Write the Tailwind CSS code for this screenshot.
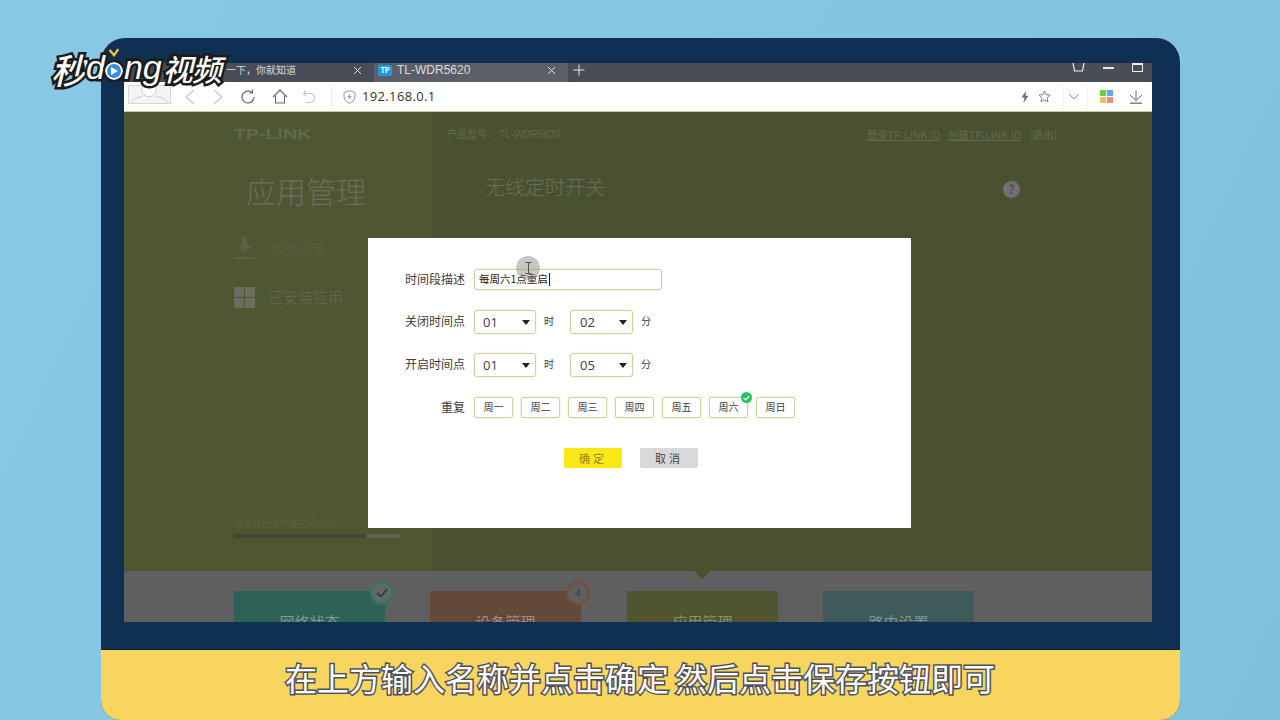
<!DOCTYPE html>
<html lang="zh">
<head>
<meta charset="utf-8">
<script src="https://cdn.jsdelivr.net/npm/@tailwindcss/browser@4"></script>
</head>
<body class="m-0 overflow-hidden">
<div class="relative w-[1280px] h-[720px] overflow-hidden pt-[38px] pl-[101px] bg-[linear-gradient(115deg,#88c8e7_0%,#85c5e4_60%,#7fc0de_100%)] font-['Noto_Sans_CJK_SC','Noto_Sans',sans-serif]">

  <div class="w-[1079px] h-[682px] flex flex-col rounded-t-[24px] rounded-b-[20px] overflow-hidden bg-[#0f3050]">
    <div class="pt-[25px] pl-[23px] pr-[28px] pb-[27px]">
      <div class="h-[559px] flex flex-col overflow-hidden">

        <!-- tab bar -->
        <div class="h-[19px] shrink-0 flex items-center bg-[#484d57] text-[10px] text-[#d8dadd] leading-none">
          <div class="w-[250px] h-full flex items-center justify-between pl-[102px] pr-[12px] pb-[5px]">
            <span class="whitespace-nowrap">一下，你就知道</span>
            <svg class="w-[9px] h-[9px]" viewBox="0 0 9 9" fill="none" stroke="#d8dadd" stroke-width="1"><path d="M1 1l7 7M8 1l-7 7"/></svg>
          </div>
          <div class="w-[194px] h-full flex items-center justify-between pl-[4px] pr-[12px] pb-[5px] bg-[#5b6068]">
            <div class="flex items-center gap-[5px]">
              <span class="w-[14px] h-[11px] rounded-[2px] bg-[#1e9be8] text-white text-[7px] font-bold flex items-center justify-center">TP</span>
              <span class="whitespace-nowrap font-['Liberation_Sans'] text-[12px]">TL-WDR5620</span>
            </div>
            <svg class="w-[9px] h-[9px]" viewBox="0 0 9 9" fill="none" stroke="#e2e4e6" stroke-width="1"><path d="M1 1l7 7M8 1l-7 7"/></svg>
          </div>
          <svg class="ml-[5px] mb-[5px] w-[12px] h-[12px]" viewBox="0 0 12 12" fill="none" stroke="#e8e8e8" stroke-width="1"><path d="M6 0.5v11M0.5 6h11"/></svg>
          <div class="ml-auto h-full flex items-start gap-[18px] pr-[9px]">
            <svg class="w-[13px] h-[10px]" viewBox="0 0 13 10" fill="none" stroke="#eee" stroke-width="1.2"><path d="M1 0l1.500 8h8L12 0"/></svg>
            <div class="w-[11px] h-[1.5px] mt-[4px] bg-[#e8e8e8]"></div>
            <div class="w-[11px] h-[9px] border border-[#eee] border-t-2"></div>
          </div>
        </div>

        <!-- address bar -->
        <div class="h-[30px] shrink-0 flex items-center bg-white border-b border-[#c7c9a8] pl-[4px] pr-[9px] text-[#8a8a8a]">
          <div class="w-[43px] h-[19px] -mt-[5px] bg-[#f4f4f4] border border-[#d5d5d5] overflow-hidden">
            <svg viewBox="0 0 43 19" class="w-full h-full" fill="none" stroke="#c9c9c9"><path d="M2 19c1-6 8-6 12-8M41 19c-1-6-8-6-12-8"/><circle cx="21" cy="4" r="8" fill="#fff"/></svg>
          </div>
          <svg class="ml-[13px] w-[12px] h-[16px]" viewBox="0 0 12 16" fill="none" stroke="#c4c4c4" stroke-width="1.1"><path d="M10 1L2 8l8 7"/></svg>
          <svg class="ml-[16px] w-[12px] h-[16px]" viewBox="0 0 12 16" fill="none" stroke="#c4c4c4" stroke-width="1.1"><path d="M2 1l8 7-8 7"/></svg>
          <svg class="ml-[16px] w-[16px] h-[16px]" viewBox="0 0 16 16" fill="none" stroke="#666" stroke-width="1.2"><path d="M14 8a6 6 0 1 1-2-4.5"/><path d="M12.5 0.5v3.5H9"/></svg>
          <svg class="ml-[16px] w-[16px] h-[15px]" viewBox="0 0 16 15" fill="none" stroke="#666" stroke-width="1.1"><path d="M1 8l7-7 7 7"/><path d="M3.5 6.5V14h9V6.5"/></svg>
          <svg class="ml-[14px] w-[14px] h-[14px]" viewBox="0 0 14 14" fill="none" stroke="#c4c4c4" stroke-width="1.1"><path d="M4 1L1.5 3.5 4 6"/><path d="M2 3.5h6a4.5 4.5 0 0 1 0 9H4"/></svg>
          <div class="ml-[15px] w-px h-[20px] bg-[#ececec]"></div>
          <svg class="ml-[11px] w-[13px] h-[14px]" viewBox="0 0 13 14" fill="none" stroke="#8c8c8c" stroke-width="0.9"><path d="M6.5 0.7L12 2.5v4c0 3.5-2.5 5.7-5.500 6.800C3.500 12.200 1 10 1 6.500v-4z"/><path d="M6.500 4.500v4.500M4.200 6.800h4.600"/></svg>
          <span class="ml-[6px] text-[13px] tracking-[0.35px] text-[#333] font-['Open_Sans'] leading-none whitespace-nowrap">192.168.0.1</span>
          <div class="ml-auto flex items-center h-full">
            <svg class="w-[8px] h-[12px]" viewBox="0 0 8 12" fill="#6d6d6d"><path d="M5 0L0.500 6.500H3.500L2.500 12 7.500 4.800H4.500z"/></svg>
            <svg class="ml-[9px] w-[13px] h-[13px]" viewBox="0 0 13 13" fill="none" stroke="#808080" stroke-width="1"><path d="M6.500 1l1.700 3.600 3.800 0.500-2.800 2.700 0.700 3.900-3.400-1.900-3.400 1.900 0.700-3.900L1 5.100l3.800-0.500z"/></svg>
            <div class="ml-[12px] w-px h-[22px] bg-[#f0f0f0]"></div>
            <svg class="ml-[5px] w-[10px] h-[6px]" viewBox="0 0 10 6" fill="none" stroke="#8a8a8a" stroke-width="1"><path d="M0.500 0.500l4.500 4.500 4.500-4.500"/></svg>
            <div class="ml-[8px] w-px h-[22px] bg-[#f0f0f0]"></div>
            <div class="ml-[12px] w-[13px] h-[13px] grid grid-cols-2 grid-rows-2 gap-[1px]">
              <div class="bg-[#6fcf3f]"></div><div class="bg-[#5aa9ef]"></div><div class="bg-[#f6ba6a]"></div><div class="bg-[#f28b71]"></div>
            </div>
            <svg class="ml-[16px] w-[14px] h-[14px]" viewBox="0 0 14 14" fill="none" stroke="#666" stroke-width="1"><path d="M7 0.500V10M1 5l6 5.500L13 5"/><path d="M1 13.200h12" stroke-width="1.300"/></svg>
          </div>
        </div>

        <!-- dimmed page -->
        <div class="h-[459px] shrink-0 flex bg-[#495130] text-[#6c7056]">
          <div class="w-[308px] shrink-0 bg-[#4e5632] pl-[110px] flex flex-col">
            <div class="pt-[14px] text-[14px] leading-[16px] font-bold font-['Liberation_Sans'] text-[#636850]"><span class="inline-block origin-left scale-x-[1.4]">TP-LINK</span></div>
            <div class="pt-[26px] pl-[12px] text-[30px] leading-[44px] font-light text-[#6b6e5e] whitespace-nowrap">应用管理</div>
            <div class="pt-[25px] flex items-center gap-[14px] h-[47px]">
              <svg class="w-[21px] h-[22px]" viewBox="0 0 21 22" fill="#5b6148"><path d="M8 0h5v8h5l-7.500 8L3 8h5z"/><path d="M0 20h21v2H0z"/></svg>
              <span class="text-[14px] text-[#585e3e]">添加应用</span>
            </div>
            <div class="mt-[27px] flex items-center gap-[13px]">
              <div class="w-[21px] h-[21px] grid grid-cols-2 grid-rows-2 gap-[1px]">
                <div class="bg-[#6a6e5e]"></div><div class="bg-[#6a6e5e]"></div><div class="bg-[#6a6e5e]"></div><div class="bg-[#6a6e5e]"></div>
              </div>
              <span class="text-[15px] text-[#666a52] font-light">已安装应用</span>
            </div>
            <div class="mt-[209px] text-[9px] leading-[12px] text-[#5c6240] whitespace-nowrap">路由器已用存储空间50%</div>
            <div class="mt-[4px] w-[166px] h-[4px] bg-[#5b6148]"><div class="w-[132px] h-full bg-[#3f4632]"></div></div>
          </div>
          <div class="flex-1 flex flex-col relative">
            <div class="pt-[14px] pl-[15px] pr-[96px] flex justify-between items-center text-[10px] leading-[16px] whitespace-nowrap text-[#656a4e]">
              <span>产品型号： <span class="font-['Liberation_Sans']">TL-WDR5620</span></span>
              <span class="flex gap-[8px] text-[10.5px] -mr-[1px]"><span class="underline">登录TP-LINK ID</span><span class="underline">创建TP-LINK ID</span><span>[退出]</span></span>
            </div>
            <div class="mt-[30px] pl-[53px] pr-[132px] flex justify-between items-center">
              <span class="text-[20px] leading-[28px] font-light text-[#6b6e5e] whitespace-nowrap">无线定时开关</span>
              <span class="w-[17px] h-[17px] mt-[4px] rounded-full bg-[#70707a] text-[12px] font-bold text-[#7a3c3c] flex items-center justify-center leading-none">?</span>
            </div>
          </div>
        </div>

        <!-- dimmed tiles -->
        <div class="relative flex-1 bg-[#5f5f5f] pt-[20px] pl-[110px] flex gap-[45px] overflow-hidden">
          <div class="relative w-[151px] h-[40px] bg-[#2f6256] text-center text-[#7f9f98] text-[15px] leading-[62px]">网络状态
            <div class="absolute -right-[9px] -top-[10px] w-[24px] h-[24px] rounded-full bg-[#5f6a68] border-2 border-[#2f7466] flex items-center justify-center">
              <svg class="w-[12px] h-[10px]" viewBox="0 0 12 10" fill="none" stroke="#2b3c39" stroke-width="1.800"><path d="M1 5l4 3.500L11 1"/></svg>
            </div>
          </div>
          <div class="relative w-[151px] h-[40px] bg-[#63493a] text-center text-[#a09085] text-[15px] leading-[62px]">设备管理
            <div class="absolute -right-[9px] -top-[10px] w-[24px] h-[24px] rounded-full bg-[#5f5f5f] border-2 border-[#7a4a38] flex items-center justify-center text-[10px] leading-none text-[#4a4040]">4</div>
          </div>
          <div class="w-[151px] h-[40px] ml-[1px] bg-[#50552f] text-center text-[#8a8d6f] text-[15px] leading-[62px]">应用管理</div>
          <div class="w-[151px] h-[40px] bg-[#3f5a5a] text-center text-[#7f9696] text-[15px] leading-[62px]">路由设置</div>
          <div class="absolute left-[570px] top-0 w-0 h-0 border-l-[8px] border-r-[8px] border-t-[8px] border-l-transparent border-r-transparent border-t-[#495130]"></div>
        </div>
      </div>
    </div>

    <!-- caption band -->
    <div class="flex-1 bg-[#f8d55f] border-t border-[#0a2238] flex justify-start pl-[184px] pt-[5px]">
      <span class="text-[32px] leading-[44px] text-white whitespace-nowrap font-normal [-webkit-text-stroke:3px_#4c4f5e] [paint-order:stroke_fill] flex"><span>在上方输入名称并点击确定</span><span class="ml-[6px]">然后点击保存按钮即可</span></span>
    </div>
  </div>

  <!-- dialog -->
  <div class="absolute left-[368px] top-[238px] w-[543px] h-[290px] bg-white pt-[31px] text-[12px] text-[#3c3c3c]">
    <div class="flex items-center h-[21px]">
      <div class="w-[97px] pb-[2px] text-right leading-none">时间段描述</div>
      <div class="ml-[9px] w-[188px] h-[21px] border border-[#c9d69c] shadow-[0_0_2px_#d6e0ae] rounded-[3px] pl-[4px] flex items-center text-[10.500px] text-[#222] leading-none whitespace-nowrap">每周六1点重启<span class="ml-[1px] w-px h-[13px] bg-[#222]"></span></div>
    </div>
    <div class="mt-[20px] flex items-center h-[24px]">
      <div class="w-[97px] pb-[2px] text-right leading-none">关闭时间点</div>
      <div class="ml-[9px] w-[62px] h-[24px] border border-[#c9d69c] shadow-[0_0_2px_#d6e0ae] rounded-[3px] pl-[8px] pr-[5px] flex items-center justify-between text-[13px] font-['Open_Sans'] leading-none">01<span class="w-0 h-0 border-l-[4px] border-r-[4px] border-t-[5px] border-l-transparent border-r-transparent border-t-[#222]"></span></div>
      <div class="ml-[8px] pb-[2px] w-[26px] text-[10px] leading-none">时</div>
      <div class="w-[63px] h-[24px] border border-[#c9d69c] shadow-[0_0_2px_#d6e0ae] rounded-[3px] pl-[9px] pr-[5px] flex items-center justify-between text-[13px] font-['Open_Sans'] leading-none">02<span class="w-0 h-0 border-l-[4px] border-r-[4px] border-t-[5px] border-l-transparent border-r-transparent border-t-[#222]"></span></div>
      <div class="ml-[8px] pb-[2px] text-[10px] leading-none">分</div>
    </div>
    <div class="mt-[19px] flex items-center h-[24px]">
      <div class="w-[97px] pb-[2px] text-right leading-none">开启时间点</div>
      <div class="ml-[9px] w-[62px] h-[24px] border border-[#c9d69c] shadow-[0_0_2px_#d6e0ae] rounded-[3px] pl-[8px] pr-[5px] flex items-center justify-between text-[13px] font-['Open_Sans'] leading-none">01<span class="w-0 h-0 border-l-[4px] border-r-[4px] border-t-[5px] border-l-transparent border-r-transparent border-t-[#222]"></span></div>
      <div class="ml-[8px] pb-[2px] w-[26px] text-[10px] leading-none">时</div>
      <div class="w-[63px] h-[24px] border border-[#c9d69c] shadow-[0_0_2px_#d6e0ae] rounded-[3px] pl-[9px] pr-[5px] flex items-center justify-between text-[13px] font-['Open_Sans'] leading-none">05<span class="w-0 h-0 border-l-[4px] border-r-[4px] border-t-[5px] border-l-transparent border-r-transparent border-t-[#222]"></span></div>
      <div class="ml-[8px] pb-[2px] text-[10px] leading-none">分</div>
    </div>
    <div class="mt-[20px] flex items-center h-[21px]">
      <div class="w-[97px] pb-[2px] text-right leading-none">重复</div>
      <div class="ml-[9px] flex gap-[8px] text-[10px] leading-none">
        <div class="w-[39px] h-[21px] border border-[#c9d69c] shadow-[0_0_2px_#d6e0ae] rounded-[2px] pb-[2px] flex items-center justify-center">周一</div>
        <div class="w-[39px] h-[21px] border border-[#c9d69c] shadow-[0_0_2px_#d6e0ae] rounded-[2px] pb-[2px] flex items-center justify-center">周二</div>
        <div class="w-[39px] h-[21px] border border-[#c9d69c] shadow-[0_0_2px_#d6e0ae] rounded-[2px] pb-[2px] flex items-center justify-center">周三</div>
        <div class="w-[39px] h-[21px] border border-[#c9d69c] shadow-[0_0_2px_#d6e0ae] rounded-[2px] pb-[2px] flex items-center justify-center">周四</div>
        <div class="w-[39px] h-[21px] border border-[#c9d69c] shadow-[0_0_2px_#d6e0ae] rounded-[2px] pb-[2px] flex items-center justify-center">周五</div>
        <div class="relative w-[39px] h-[21px] border border-[#c9d69c] shadow-[0_0_2px_#d6e0ae] rounded-[2px] pb-[2px] flex items-center justify-center">周六
          <div class="absolute -right-[5px] -top-[6px] w-[11px] h-[11px] rounded-full bg-[#22c55e] flex items-center justify-center">
            <svg class="w-[7px] h-[6px]" viewBox="0 0 7 6" fill="none" stroke="#fff" stroke-width="1.200"><path d="M0.700 3l2 2L6.300 1"/></svg>
          </div>
        </div>
        <div class="w-[39px] h-[21px] border border-[#c9d69c] shadow-[0_0_2px_#d6e0ae] rounded-[2px] pb-[2px] flex items-center justify-center">周日</div>
      </div>
    </div>
    <div class="mt-[30px] pl-[196px] flex gap-[18px] text-[11px] leading-none tracking-[3px]">
      <div class="w-[58px] h-[20px] bg-[#f9e814] rounded-[2px] text-[#8f8420] flex items-center justify-center">确定</div>
      <div class="w-[58px] h-[20px] bg-[#d9d9d9] rounded-[2px] text-[#444] flex items-center justify-center">取消</div>
    </div>
  </div>

  <!-- pointer highlight -->
  <div class="absolute left-[516px] top-[256px] w-[24px] h-[24px] rounded-full bg-[#8f8f8f]/50 flex items-center justify-center">
    <svg class="w-[7px] h-[12px]" viewBox="0 0 7 12" fill="none" stroke="#555" stroke-width="1"><path d="M0.500 0.500h6M0.500 11.500h6M3.500 0.500v11"/></svg>
  </div>

  <!-- watermark logo -->
  <div class="absolute left-[51px] top-[43px] h-[50px] flex items-center whitespace-nowrap text-white italic font-medium leading-none [-webkit-text-stroke:5px_#1a1a1a] [paint-order:stroke_fill]">
    <span class="text-[35px] tracking-[-1px]">秒</span>
    <span class="text-[34px] font-['Liberation_Sans'] ml-[1px] -mt-[2px]">d</span>
    <span class="relative w-[18px] h-[18px] mt-[5px] rounded-full bg-[#3b8ae0] border-[2px] border-white outline-[2px] outline-[#1a1a1a] flex items-center justify-center">
      <span class="w-0 h-0 border-l-[7px] border-t-[4px] border-b-[4px] border-l-white border-t-transparent border-b-transparent ml-[1px]"></span>
      <svg class="absolute -top-[16px] left-[1px] w-[12px] h-[10px]" viewBox="0 0 14 11" fill="none" stroke="#f3cf3a" stroke-width="2.500"><path d="M2 2l5 6 5-7"/></svg>
    </span>
    <span class="text-[34px] font-['Liberation_Sans'] -mt-[2px] ml-[1px]">ng</span>
    <span class="text-[30px] tracking-[-1px] ml-[1px]">视频</span>
  </div>
</div>
</body>
</html>
